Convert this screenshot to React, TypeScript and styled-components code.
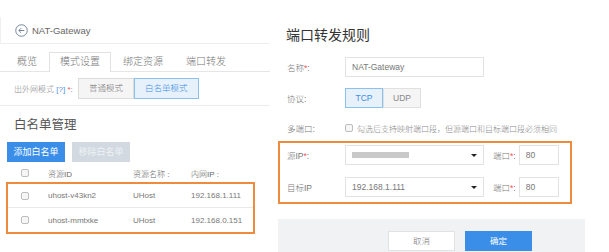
import styled, { createGlobalStyle, css } from "styled-components";

const GlobalStyle = createGlobalStyle`
  html, body {
    margin: 0;
    padding: 0;
    background: #fff;
  }
  body {
    font-family: "Liberation Sans", "Noto Sans CJK SC", sans-serif;
    font-weight: 300;
    color: #666;
  }
`;

const Page = styled.div`
  display: flex;
  width: 609px;
  height: 252px;
  overflow: hidden;
`;

/* ---------- left: nat gateway detail ---------- */

const LeftPanel = styled.div`
  width: 270px;
  display: flex;
  flex-direction: column;
`;

const Header = styled.div`
  margin-top: 17px;
  height: 26px;
  display: flex;
  align-items: center;
  gap: 4px;
  padding-left: 14px;
  border-left: 1px solid #f0f0f0;
  border-bottom: 1px solid #eeeeee;
  font-size: 9.5px;
  color: #666;
`;

const TabBar = styled.div`
  display: flex;
  margin-top: 8px;
  padding-left: 6px;
  border-bottom: 1px solid #e6e6e6;
`;

const Tab = styled.div<{ $active?: boolean }>`
  box-sizing: border-box;
  height: 20px;
  line-height: 18px;
  padding: 0 10px;
  margin-right: 1px;
  margin-bottom: -1px;
  font-size: 10px;
  color: #777;
  border: 1px solid transparent;
  border-bottom: 0;
  ${(p) =>
    p.$active &&
    css`
      border-color: #e2e2e2;
      background: #fff;
    `}
`;

const ModeRow = styled.div`
  display: flex;
  align-items: center;
  margin-top: 6px;
  padding-left: 14px;
  font-size: 8px;
  color: #888;
`;

const ModeLabel = styled.span`
  width: 64px;
  white-space: nowrap;
`;

const Help = styled.span`
  color: #4a90e2;
`;

const Req = styled.span`
  color: #e55;
`;

const ModeButton = styled.div<{ $active?: boolean }>`
  box-sizing: border-box;
  height: 21px;
  line-height: 19px;
  padding: 0 10px;
  font-size: 8.5px;
  border: 1px solid #dcdcdc;
  background: #f5f5f5;
  color: #777;
  ${(p) =>
    p.$active &&
    css`
      background: #e6f1fc;
      border-color: #8cc1ee;
      color: #3d8ee4;
    `}
`;

const Divider = styled.div`
  margin-top: 6px;
  height: 1px;
  background: #ececec;
`;

const Heading = styled.div`
  margin: 12px 0 0 14px;
  font-size: 12.5px;
  font-weight: 400;
  line-height: 14px;
  color: #555;
`;

const ActionBar = styled.div`
  display: flex;
  gap: 7px;
  margin: 10px 0 0 7px;
`;

const ActionButton = styled.div<{ $disabled?: boolean }>`
  height: 20px;
  line-height: 20px;
  width: 58px;
  text-align: center;
  font-size: 9px;
  font-weight: 400;
  color: #fff;
  background: ${(p) => (p.$disabled ? "#d2d9e1" : "#3a8ee8")};
  ${(p) => p.$disabled && "color: #eef2f6;"}
`;

const cols = css`
  display: grid;
  grid-template-columns: 40px 85px 58px 1fr;
  align-items: center;
  font-size: 8px;
`;

const TableHead = styled.div`
  ${cols};
  height: 18px;
  margin-top: 2px;
  padding-left: 8px;
  color: #666;
`;

const Highlight = styled.div<{ $width: number }>`
  box-sizing: border-box;
  width: ${(p) => p.$width}px;
  border: 2px solid #ee8b3d;
`;

const TableBox = styled(Highlight)`
  margin-left: 6px;
`;

const TableRow = styled.div<{ $last?: boolean }>`
  ${cols};
  height: 24px;
  color: #777;
  border-bottom: ${(p) => (p.$last ? "0" : "1px solid #e8e8e8")};
  box-sizing: border-box;
`;

const Check = styled.span`
  display: block;
  box-sizing: border-box;
  width: 8px;
  height: 8px;
  border: 1px solid #bdbdbd;
  border-radius: 2px;
  background: #f6f6f6;
`;

const CheckCell = styled.div`
  padding-left: 13px;
`;

/* ---------- right: port forwarding form ---------- */

const RightPanel = styled.div`
  width: 331px;
  margin-left: 8px;
  display: flex;
  flex-direction: column;
`;

const Title = styled.div`
  margin: 26px 0 0 8px;
  font-size: 14px;
  font-weight: 400;
  line-height: 18px;
  color: #333;
`;

const FormRow = styled.div<{ $top: number; $inset?: boolean }>`
  display: flex;
  align-items: center;
  margin-top: ${(p) => p.$top}px;
  padding-left: ${(p) => (p.$inset ? 7 : 9)}px;
`;

const Label = styled.div`
  width: 58px;
  flex: none;
  font-size: 8.5px;
  color: #777;
`;

const Field = styled.div<{ $width: number }>`
  box-sizing: border-box;
  width: ${(p) => p.$width}px;
  height: 20px;
  display: flex;
  align-items: center;
  padding: 0 6px;
  border: 1px solid #e2e2e2;
  background: #fff;
  font-size: 8.5px;
  color: #777;
`;

const Caret = styled.span`
  margin-left: auto;
  width: 0;
  height: 0;
  border-left: 3px solid transparent;
  border-right: 3px solid transparent;
  border-top: 3px solid #222;
`;

const Placeholder = styled.span`
  width: 57px;
  height: 6px;
  background: #c9c9c9;
`;

const PortLabel = styled.span`
  margin: 0 3px 0 9px;
  font-size: 8.5px;
  color: #777;
  white-space: nowrap;
`;

const Segmented = styled.div`
  display: flex;
`;

const SegButton = styled.div<{ $active?: boolean }>`
  box-sizing: border-box;
  width: 38px;
  height: 20px;
  line-height: 18px;
  text-align: center;
  font-size: 8.5px;
  border: 1px solid #e0e0e0;
  background: #f5f5f5;
  color: #888;
  ${(p) =>
    p.$active &&
    css`
      background: #e6f1fc;
      border-color: #8cc1ee;
      color: #3d8ee4;
    `}
`;

const Hint = styled.div`
  display: flex;
  align-items: center;
  gap: 4px;
  font-size: 8px;
  color: #888;
  white-space: nowrap;
`;

const PortBox = styled(Highlight)`
  margin-top: 7px;
  padding-bottom: 5px;
`;

const Footer = styled.div`
  margin-top: 15px;
  width: 307px;
  height: 40px;
  box-sizing: border-box;
  padding: 12px 0 0 110px;
  display: flex;
  gap: 10px;
  background: #f1f2f4;
`;

const FooterButton = styled.div<{ $primary?: boolean }>`
  box-sizing: border-box;
  width: 67px;
  height: 20px;
  line-height: 18px;
  text-align: center;
  font-size: 8.5px;
  font-weight: ${(p) => (p.$primary ? 400 : 300)};
  border: 1px solid ${(p) => (p.$primary ? "#3a8ee8" : "#e2e2e2")};
  background: ${(p) => (p.$primary ? "#3a8ee8" : "#fff")};
  color: ${(p) => (p.$primary ? "#fff" : "#777")};
`;

function BackIcon() {
  return (
    <svg width="13" height="13" viewBox="0 0 14 14" fill="none">
      <circle cx="7" cy="7" r="6.2" stroke="#6b7c93" strokeWidth="1" />
      <path d="M10 7H4.2M6.6 4.5L4.1 7l2.5 2.5" stroke="#6b7c93" strokeWidth="1" />
    </svg>
  );
}

const hosts = [
  { id: "uhost-v43kn2", type: "UHost", ip: "192.168.1.111" },
  { id: "uhost-mmtxke", type: "UHost", ip: "192.168.0.151" },
];

export default function App() {
  return (
    <Page>
      <GlobalStyle />
      <LeftPanel>
        <Header>
          <BackIcon />
          NAT-Gateway
        </Header>
        <TabBar>
          <Tab>概览</Tab>
          <Tab $active>模式设置</Tab>
          <Tab>绑定资源</Tab>
          <Tab>端口转发</Tab>
        </TabBar>
        <ModeRow>
          <ModeLabel>
            出外网模式 <Help>[?]</Help> <Req>*</Req>:
          </ModeLabel>
          <ModeButton>普通模式</ModeButton>
          <ModeButton $active>白名单模式</ModeButton>
        </ModeRow>
        <Divider />
        <Heading>白名单管理</Heading>
        <ActionBar>
          <ActionButton>添加白名单</ActionButton>
          <ActionButton $disabled>移除白名单</ActionButton>
        </ActionBar>
        <TableHead>
          <CheckCell>
            <Check />
          </CheckCell>
          <span>资源ID</span>
          <span>资源名称 :</span>
          <span>内网IP :</span>
        </TableHead>
        <TableBox $width={249}>
          {hosts.map((h, i) => (
            <TableRow key={h.id} $last={i === hosts.length - 1}>
              <CheckCell>
                <Check />
              </CheckCell>
              <span>{h.id}</span>
              <span>{h.type}</span>
              <span>{h.ip}</span>
            </TableRow>
          ))}
        </TableBox>
      </LeftPanel>

      <RightPanel>
        <Title>端口转发规则</Title>
        <FormRow $top={13}>
          <Label>
            名称<Req>*</Req>:
          </Label>
          <Field $width={139}>NAT-Gateway</Field>
        </FormRow>
        <FormRow $top={11}>
          <Label>协议:</Label>
          <Segmented>
            <SegButton $active>TCP</SegButton>
            <SegButton>UDP</SegButton>
          </Segmented>
        </FormRow>
        <FormRow $top={14}>
          <Label>多端口:</Label>
          <Hint>
            <Check />
            勾选后支持映射端口段，但源端口和目标端口段必须相同
          </Hint>
        </FormRow>
        <PortBox $width={294}>
          <FormRow $top={2} $inset>
            <Label>
              源IP<Req>*</Req>:
            </Label>
            <Field $width={139}>
              <Placeholder />
              <Caret />
            </Field>
            <PortLabel>
              端口<Req>*</Req>:
            </PortLabel>
            <Field $width={40}>80</Field>
          </FormRow>
          <FormRow $top={12} $inset>
            <Label>目标IP</Label>
            <Field $width={139}>
              192.168.1.111
              <Caret />
            </Field>
            <PortLabel>
              端口<Req>*</Req>:
            </PortLabel>
            <Field $width={40}>80</Field>
          </FormRow>
        </PortBox>
        <Footer>
          <FooterButton>取消</FooterButton>
          <FooterButton $primary>确定</FooterButton>
        </Footer>
      </RightPanel>
    </Page>
  );
}
